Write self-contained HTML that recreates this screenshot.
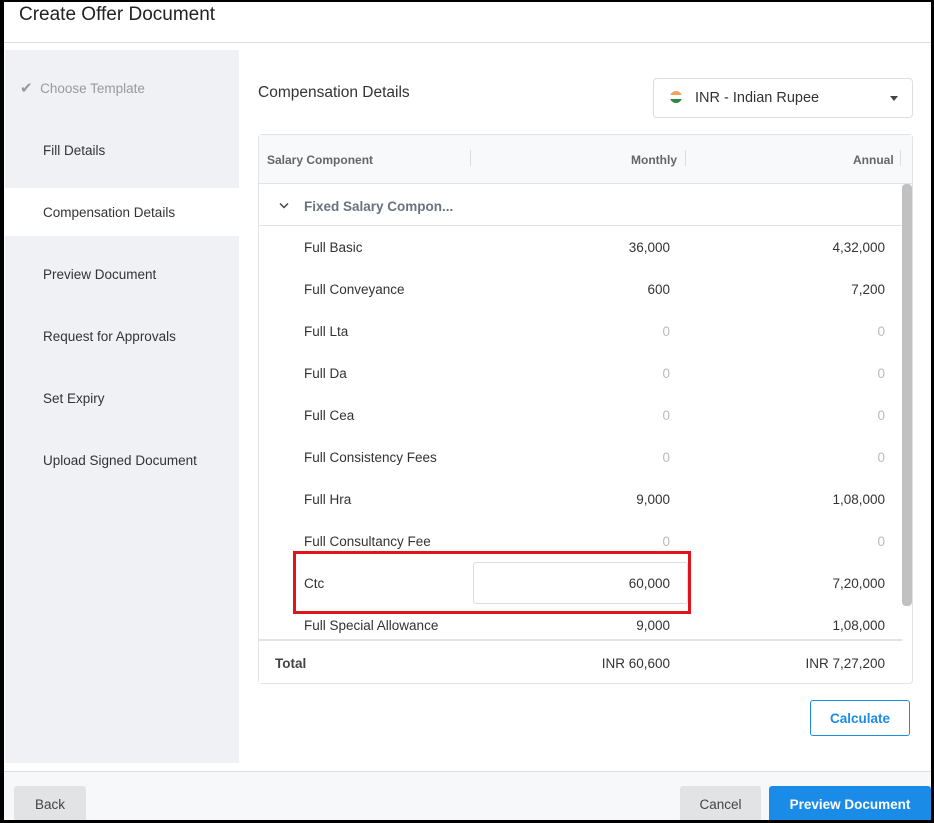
<!DOCTYPE html>
<html><head><style>
*{margin:0;padding:0;box-sizing:border-box}
body{width:934px;height:823px;background:#000;font-family:"Liberation Sans",sans-serif;position:relative;overflow:hidden;color:#333}
.a{position:absolute}
.main{left:4px;top:2px;width:927px;height:818px;background:#fff}
.t{font-size:13.5px;white-space:nowrap;margin-top:1px}
.r{text-align:right;width:120px}
.z{color:#bbb}
</style></head><body>
<div class="a main"></div>
<div class="a t" style="left:19px;top:3px;font-size:19px;color:#222">Create Offer Document</div>
<div class="a" style="left:4px;top:42px;width:927px;height:1px;background:#ddd"></div>
<div class="a" style="left:5px;top:50px;width:234px;height:713px;background:#f0f1f4"></div>
<div class="a" style="left:5px;top:188px;width:234px;height:48px;background:#fff"></div>
<div class="a t" style="left:20px;top:78px;color:#999"><span style="font-size:15px">✔</span>&nbsp; Choose Template</div>
<div class="a t" style="left:43px;top:142px">Fill Details</div>
<div class="a t" style="left:43px;top:204px">Compensation Details</div>
<div class="a t" style="left:43px;top:266px">Preview Document</div>
<div class="a t" style="left:43px;top:328px">Request for Approvals</div>
<div class="a t" style="left:43px;top:390px">Set Expiry</div>
<div class="a t" style="left:43px;top:452px">Upload Signed Document</div>
<div class="a t" style="left:258px;top:83px;font-size:15.5px">Compensation Details</div>
<div class="a" style="left:653px;top:78px;width:260px;height:40px;border:1px solid #ddd;border-radius:4px"></div>
<div class="a" style="left:670px;top:91px;width:12px;height:12px;border-radius:50%;background:linear-gradient(#f4a15a 0 33%,#fff 33% 66%,#2a8a3e 66%)"></div>
<div class="a t" style="left:695px;top:89px;font-size:14.5px">INR - Indian Rupee</div>
<div class="a" style="left:890px;top:96px;border-left:4px solid transparent;border-right:4px solid transparent;border-top:5px solid #444"></div>
<div class="a" style="left:258px;top:134px;width:655px;height:550px;border:1px solid #e3e3e3;border-radius:4px"></div>
<div class="a" style="left:259px;top:135px;width:653px;height:49px;background:#f8f9fa;border-bottom:1px solid #e3e3e3"></div>
<div class="a t" style="left:267px;top:152px;font-size:12px;font-weight:bold;color:#666">Salary Component</div>
<div class="a" style="left:470px;top:150px;width:1px;height:16px;background:#ddd"></div>
<div class="a t" style="left:631px;top:152px;font-size:12px;font-weight:bold;color:#666">Monthly</div>
<div class="a" style="left:685px;top:150px;width:1px;height:16px;background:#ddd"></div>
<div class="a t" style="left:853px;top:152px;font-size:12px;font-weight:bold;color:#666">Annual</div>
<div class="a" style="left:900px;top:150px;width:1px;height:16px;background:#ddd"></div>
<svg class="a" style="left:279px;top:202px" width="10" height="7"><path d="M1 1.5L5 5.5L9 1.5" fill="none" stroke="#444" stroke-width="1.5"/></svg>
<div class="a t" style="left:304px;top:198px;font-weight:bold;color:#6a7280">Fixed Salary Compon...</div>
<div class="a" style="left:259px;top:225px;width:643px;height:1px;background:#e3e3e3"></div>
<div class="a" style="left:902px;top:184px;width:10px;height:422px;background:#c1c1c1;border-radius:4px"></div>

<div class="a t" style="left:304px;top:239px">Full Basic</div><div class="a t r" style="left:550px;top:239px">36,000</div><div class="a t r" style="left:765px;top:239px">4,32,000</div>
<div class="a t" style="left:304px;top:281px">Full Conveyance</div><div class="a t r" style="left:550px;top:281px">600</div><div class="a t r" style="left:765px;top:281px">7,200</div>
<div class="a t" style="left:304px;top:323px">Full Lta</div><div class="a t r z" style="left:550px;top:323px">0</div><div class="a t r z" style="left:765px;top:323px">0</div>
<div class="a t" style="left:304px;top:365px">Full Da</div><div class="a t r z" style="left:550px;top:365px">0</div><div class="a t r z" style="left:765px;top:365px">0</div>
<div class="a t" style="left:304px;top:407px">Full Cea</div><div class="a t r z" style="left:550px;top:407px">0</div><div class="a t r z" style="left:765px;top:407px">0</div>
<div class="a t" style="left:304px;top:449px">Full Consistency Fees</div><div class="a t r z" style="left:550px;top:449px">0</div><div class="a t r z" style="left:765px;top:449px">0</div>
<div class="a t" style="left:304px;top:491px">Full Hra</div><div class="a t r" style="left:550px;top:491px">9,000</div><div class="a t r" style="left:765px;top:491px">1,08,000</div>
<div class="a t" style="left:304px;top:533px">Full Consultancy Fee</div><div class="a t r z" style="left:550px;top:533px">0</div><div class="a t r z" style="left:765px;top:533px">0</div>
<div class="a" style="left:473px;top:562px;width:215px;height:42px;border:1px solid #ddd;border-radius:3px;background:#fff"></div>
<div class="a t" style="left:304px;top:575px">Ctc</div><div class="a t r" style="left:550px;top:575px">60,000</div><div class="a t r" style="left:765px;top:575px">7,20,000</div>
<div class="a" style="left:293px;top:551px;width:398px;height:63px;border:3px solid #e0141b"></div>
<div class="a t" style="left:304px;top:617px">Full Special Allowance</div><div class="a t r" style="left:550px;top:617px">9,000</div><div class="a t r" style="left:765px;top:617px">1,08,000</div>
<div class="a" style="left:259px;top:639px;width:643px;height:2px;background:#e3e3e3"></div>
<div class="a" style="left:259px;top:641px;width:643px;height:42px;background:#fff"></div>
<div class="a t" style="left:275px;top:655px;font-weight:bold;color:#444">Total</div><div class="a t r" style="left:550px;top:655px">INR 60,600</div><div class="a t r" style="left:765px;top:655px">INR 7,27,200</div>
<div class="a" style="left:810px;top:700px;width:100px;height:36px;border:1px solid #1a8ce8;border-radius:3px;color:#1a8ce8;font-size:13.5px;font-weight:bold;text-align:center;line-height:36px">Calculate</div>
<div class="a" style="left:4px;top:771px;width:927px;height:1px;background:#ddd"></div>
<div class="a" style="left:4px;top:772px;width:927px;height:48px;background:#f7f8fa"></div>
<div class="a" style="left:14px;top:786px;width:72px;height:34px;background:#e2e3e5;border-radius:3px 3px 0 0;font-size:13.5px;text-align:center;line-height:37px;color:#444">Back</div>
<div class="a" style="left:680px;top:786px;width:81px;height:34px;background:#e2e3e5;border-radius:3px 3px 0 0;font-size:13.5px;text-align:center;line-height:37px;color:#444">Cancel</div>
<div class="a" style="left:769px;top:786px;width:162px;height:34px;background:#1a8ce8;border-radius:3px 3px 0 0;font-size:13.5px;font-weight:bold;text-align:center;line-height:37px;color:#fff">Preview Document</div>
</body></html>
